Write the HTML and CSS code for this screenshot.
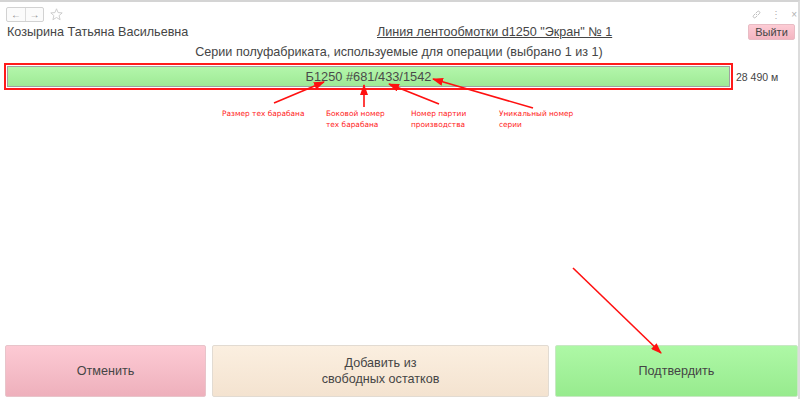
FILE: index.html
```html
<!DOCTYPE html>
<html lang="ru">
<head>
<meta charset="utf-8">
<title>Серии полуфабриката</title>
<link rel="stylesheet" href="styles.css">
</head>
<body>
<div class="app">
  <div class="toolbar">
    <div class="nav">
      <span class="nav-btn">&#8592;</span><span class="nav-btn">&#8594;</span>
    </div>
    <svg class="star" width="13" height="13" viewBox="0 0 13 13"><path d="M6.5 0.8 L8.1 4.6 L12.2 4.9 L9.1 7.6 L10.1 11.7 L6.5 9.5 L2.9 11.7 L3.9 7.6 L0.8 4.9 L4.9 4.6 Z" fill="none" stroke="#c8c8c8" stroke-width="0.9"/></svg>
    <div class="win-icons">
      <svg width="9" height="9" viewBox="0 0 9 9"><path d="M4 5 L5 4 M3.2 3.8 L1.6 5.4 a1.2 1.2 0 0 0 2 2 L5.2 5.8 M5.8 5.2 L7.4 3.6 a1.2 1.2 0 0 0 -2 -2 L3.8 3.2" fill="none" stroke="#b0b0b0" stroke-width="0.8"/></svg>
      <span class="dots">&#8942;</span>
      <span class="close">&#215;</span>
    </div>
  </div>
  <div class="header">
    <div class="user">Козырина Татьяна Васильевна</div>
    <div class="line-title">Линия лентообмотки d1250 "Экран" № 1</div>
    <button class="exit">Выйти</button>
  </div>
  <div class="subtitle">Серии полуфабриката, используемые для операции (выбрано 1 из 1)</div>
  <div class="series-row">
    <div class="highlight">
      <div class="series-bar">Б1250 #681/433/1542</div>
    </div>
    <div class="amount">28 490 м</div>
  </div>
  <div class="notes">
    <div class="note n1">Размер тех барабана</div>
    <div class="note n2">Боковой номер<br>тех барабана</div>
    <div class="note n3">Номер партии<br>производства</div>
    <div class="note n4">Уникальный номер<br>серии</div>
  </div>
  <div class="fill"></div>
  <div class="actions">
    <button class="act cancel">Отменить</button>
    <button class="act add">Добавить из<br>свободных остатков</button>
    <button class="act confirm">Подтвердить</button>
  </div>
  <svg class="arrows" width="800" height="399" viewBox="0 0 800 399">
    <defs>
      <marker id="ah" markerWidth="11" markerHeight="8" refX="10" refY="4" orient="auto" markerUnits="userSpaceOnUse">
        <path d="M0,0 L11,4 L0,8 Z" fill="#ff1010"/>
      </marker>
    </defs>
    <g stroke="#ff1010" stroke-width="1.6" fill="none" marker-end="url(#ah)">
      <line x1="274" y1="103" x2="324" y2="82"/>
      <line x1="364" y1="107" x2="364" y2="85"/>
      <line x1="439" y1="104" x2="389" y2="84"/>
      <line x1="533" y1="108" x2="433" y2="79"/>
      <line x1="573" y1="268" x2="661" y2="353"/>
    </g>
  </svg>
</div>
</body>
</html>
```

FILE: styles.css
```css
* { box-sizing: border-box; }
html, body { margin: 0; padding: 0; background: #fff; }
body {
  font-family: "Liberation Sans", Arial, sans-serif;
  color: #454545;
}
.app {
  position: relative;
  width: 800px;
  height: 399px;
  display: flex;
  flex-direction: column;
  border-top: 2px solid #d4d4d4;
  border-right: 2px solid #dcdcdc;
  overflow: hidden;
}
.toolbar {
  height: 21px;
  display: flex;
  align-items: center;
  padding: 3px 1px 0 6px;
}
.nav {
  display: flex;
  height: 15px;
  border: 1px solid #d2d2d2;
  border-radius: 2px;
  background: #fbfbfb;
}
.nav-btn {
  width: 18px;
  font-size: 10px;
  line-height: 13px;
  text-align: center;
  color: #8a8a8a;
}
.nav-btn + .nav-btn { border-left: 1px solid #dcdcdc; }
.star { margin-left: 6px; }
.win-icons {
  margin-left: auto;
  display: flex;
  align-items: center;
  gap: 10px;
  color: #b0b0b0;
  font-size: 10px;
}
.dots { font-size: 10px; }
.close { font-size: 10px; }
.header {
  height: 17px;
  display: flex;
  align-items: center;
  padding: 0 3px 0 7px;
}
.user {
  width: 370px;
  font-size: 12.6px;
}
.line-title {
  font-size: 12.6px;
  text-decoration: underline;
}
.exit {
  margin-left: auto;
  width: 47px;
  height: 16px;
  padding: 0;
  border: 1px solid #e8bcc4;
  border-radius: 2px;
  background: linear-gradient(#fdccd5, #f3b5c1);
  font-family: inherit;
  font-size: 11px;
  color: #454545;
}
.subtitle {
  margin-top: 4px;
  height: 16px;
  line-height: 16px;
  font-size: 12.6px;
  text-align: center;
}
.series-row {
  margin-top: 3px;
  display: flex;
  align-items: center;
  padding-left: 4px;
}
.highlight {
  width: 729px;
  height: 27px;
  border: 2px solid #ff1a1a;
  padding: 1px;
}
.series-bar {
  height: 21px;
  border: 1px solid #a0a0a0;
  background: linear-gradient(#b3f6ab, #9fea96);
  text-align: center;
  font-size: 12.8px;
  line-height: 19px;
  color: #4a4a4a;
}
.amount {
  margin-left: 3px;
  font-size: 10.5px;
}
.notes {
  position: relative;
  height: 50px;
}
.note {
  position: absolute;
  font-family: "DejaVu Sans", Tahoma, sans-serif;
  font-size: 7.4px;
  line-height: 11px;
  color: #ff1a1a;
}
.n1 { left: 222px; top: 18px; }
.n2 { left: 326px; top: 18px; }
.n3 { left: 411px; top: 18px; }
.n4 { left: 499px; top: 18px; }
.fill { flex: 1; }
.actions {
  display: grid;
  grid-template-columns: 201px 337px 1fr;
  gap: 6px;
  padding: 0 0 2px 5px;
  height: 54px;
}
.act {
  height: 52px;
  padding: 0;
  border: 1px solid #dcdcdc;
  border-radius: 2px;
  font-family: inherit;
  font-size: 12.6px;
  line-height: 16px;
  color: #454545;
}
.cancel { background: linear-gradient(#fdcad4, #eeb0bc); border-color: #e8c4ca; }
.add { background: linear-gradient(#fbefe0, #f4e3d0); border-color: #e2dbd2; }
.confirm { background: linear-gradient(#aef8a6, #97eb8e); border-color: #c8e8c4; }
.arrows {
  position: absolute;
  left: 0;
  top: -2px;
  pointer-events: none;
}
```
